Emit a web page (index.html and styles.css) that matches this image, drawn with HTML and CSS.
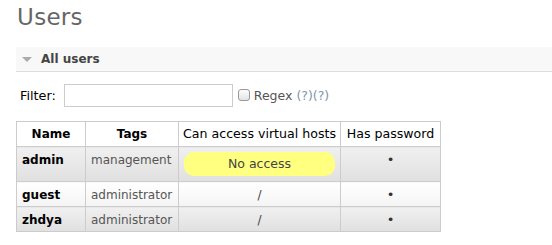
FILE: index.html
```html
<!DOCTYPE html>
<html>
<head>
<meta charset="utf-8">
<link rel="stylesheet" href="styles.css">
</head>
<body>
<h1 class="title">Users</h1>
<div class="section">
  <h2 class="section-head"><span class="arrow"></span>All users</h2>
  <div class="filter">
    <label class="filter-label">Filter:</label>
    <input class="filter-input" type="text">
    <span class="checkbox"></span>
    <span class="regex">Regex <span class="help">(?)(?)</span></span>
  </div>
  <table class="users">
    <thead>
      <tr>
        <th class="bold c-name">Name</th>
        <th class="bold c-tags">Tags</th>
        <th class="c-vhosts">Can access virtual hosts</th>
        <th class="c-pw">Has password</th>
      </tr>
    </thead>
    <tbody>
      <tr class="alt1">
        <td class="name">admin</td>
        <td class="tags">management</td>
        <td class="center"><div class="pill">No access</div></td>
        <td class="center dot">•</td>
      </tr>
      <tr class="alt2">
        <td class="name">guest</td>
        <td class="tags">administrator</td>
        <td class="center">/</td>
        <td class="center dot">•</td>
      </tr>
      <tr class="alt1">
        <td class="name">zhdya</td>
        <td class="tags">administrator</td>
        <td class="center">/</td>
        <td class="center dot">•</td>
      </tr>
    </tbody>
  </table>
</div>
</body>
</html>
```
FILE: styles.css
```css
html, body {
  margin: 0;
  padding: 0;
  background: #fff;
}
body {
  font-family: "DejaVu Sans", Verdana, sans-serif;
  font-size: 12px;
  color: #484848;
  padding: 0 0 0 16px;
  overflow: hidden;
}
.title {
  margin: 0;
  padding: 3px 0 0 1px;
  font-size: 23px;
  font-weight: normal;
  color: #666;
  line-height: 28px;
  letter-spacing: 0.3px;
}
.section {
  margin-top: 16px;
}
.section-head {
  margin: 0;
  height: 24px;
  background: #f8f8f8;
  border-bottom: 1px solid #ddd;
  font-size: 12px;
  font-weight: bold;
  color: #444;
  display: flex;
  align-items: center;
  padding-left: 6px;
}
.arrow {
  width: 0;
  height: 0;
  border-left: 5px solid transparent;
  border-right: 5px solid transparent;
  border-top: 5px solid #aaa;
  margin-right: 9px;
  margin-top: 1px;
}
.filter {
  display: flex;
  align-items: center;
  height: 22px;
  margin-top: 12px;
  padding-left: 4px;
}
.filter-label {
  color: #000;
  font-size: 12.8px;
  margin-right: 8px;
}
.filter-input {
  box-sizing: border-box;
  width: 169px;
  height: 23px;
  border: 1px solid #ccc;
  margin: 0;
  padding: 0;
}
.checkbox {
  box-sizing: border-box;
  width: 12px;
  height: 12px;
  border: 1px solid #999;
  border-radius: 3px;
  background: linear-gradient(#fcfcfc, #e4e4e4);
  margin-left: 5px;
  margin-right: 4px;
}
.regex {
  color: #555;
  font-size: 12.5px;
}
.help {
  color: #7f95a8;
}
.users {
  border-collapse: collapse;
  table-layout: fixed;
  width: 423px;
  margin-top: 15px;
  border: 1px solid #ccc;
}
.users th, .users td {
  border: 1px solid #ccc;
  padding: 4px 5px;
  line-height: 16px;
  vertical-align: top;
}
.users td {
  padding: 5px 5px 3px;
}
.users th {
  background: #fff;
  color: #000;
  font-weight: normal;
  font-size: 12.6px;
  text-align: center;
  white-space: nowrap;
  padding-left: 2px;
  padding-right: 2px;
}
.users th.bold {
  font-weight: bold;
  font-size: 12px;
}
.c-name { width: 64px; }
.c-tags { width: 88px; }
.c-vhosts { width: 157px; }
.c-pw { width: 95px; }
.alt1 td {
  background: linear-gradient(#f0f0f0, #e0e0e0);
}
.alt2 td {
  background: linear-gradient(#fff, #f4f4f4);
}
.users td.name {
  font-weight: bold;
  color: #000;
}
.users td.tags {
  color: #555;
}
.users td.center {
  text-align: center;
  color: #444;
}
.users td.dot {
  color: #333;
  font-size: 13px;
}
.pill {
  background: #ffff80;
  border-radius: 10px;
  height: 24px;
  line-height: 24px;
  margin: 0 0 2px;
  color: #444;
  font-size: 12.5px;
}
```
